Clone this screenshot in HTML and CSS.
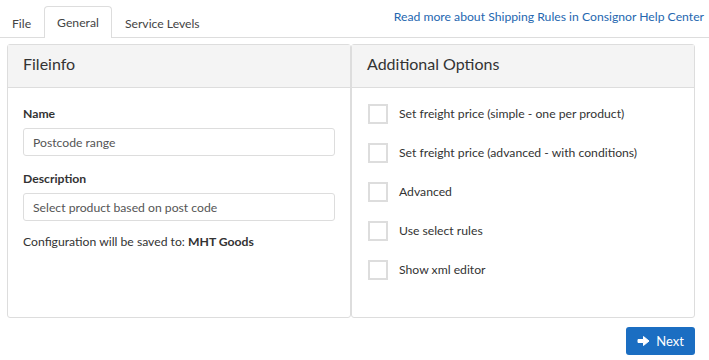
FILE: index.html
```html
<!DOCTYPE html>
<html>
<head>
    <link rel="stylesheet" href="styles.css">
</head>
<body>
    <div class="tab-bar">
        <button class="tab-btn">File</button>
        <button class="tab-btn active">General</button>
        <button class="tab-btn">Service Levels</button>
        <a class="help-link" href="#">Read more about Shipping Rules in Consignor Help Center</a>
    </div>

    <div class="content">
        <div class="panels">
            <div class="panel">
                <div class="panel-head">Fileinfo</div>
                <div class="panel-body">
                    <label class="field-label">Name</label>
                    <input class="field-input" type="text" value="Postcode range">
                    <label class="field-label">Description</label>
                    <input class="field-input" type="text" value="Select product based on post code">
                    <p class="save-note">Configuration will be saved to: <b>MHT Goods</b></p>
                </div>
            </div>

            <div class="panel">
                <div class="panel-head">Additional Options</div>
                <div class="panel-body options">
                    <label class="option"><span class="check"></span>Set freight price (simple - one per product)</label>
                    <label class="option"><span class="check"></span>Set freight price (advanced - with conditions)</label>
                    <label class="option"><span class="check"></span>Advanced</label>
                    <label class="option"><span class="check"></span>Use select rules</label>
                    <label class="option"><span class="check"></span>Show xml editor</label>
                </div>
            </div>
        </div>

        <div class="actions">
            <button class="next-btn">
                <svg width="13" height="12" viewBox="0 0 13 12"><path d="M1 4.5h5.5V1.5L12 6l-5.5 4.5v-3H1z" fill="#fff" stroke="#fff" stroke-width="1" stroke-linejoin="round"/></svg>
                Next
            </button>
        </div>
    </div>
</body>
</html>
```

FILE: styles.css
```css
body {
    font-family: Lato, "Open Sans", sans-serif;
    font-size: 12.2px;
    color: #333;
    margin: 0;
    background: #fff;
}

.tab-bar {
    display: flex;
    align-items: flex-end;
    height: 37px;
    border-bottom: 1px solid #ddd;
    padding-left: 0;
}

.tab-btn {
    font: inherit;
    color: #444;
    background: none;
    border: 1px solid transparent;
    border-bottom: none;
    border-radius: 4px 4px 0 0;
    padding: 0 12px;
    height: 31px;
    margin-bottom: -1px;
    cursor: pointer;
}

.tab-btn:first-child {
    padding: 0 12px 0 11px;
}

.tab-btn.active {
    background: #fff;
    border-color: #ddd;
    height: 32px;
}

.help-link {
    margin-left: auto;
    align-self: center;
    margin-top: -4px;
    padding-right: 5px;
    color: #2567b0;
    text-decoration: none;
}

.content {
    padding: 6px 14px 0 7px;
}

.panels {
    display: grid;
    grid-template-columns: 1fr 1fr;
}

.panel {
    border: 1px solid #ddd;
    border-radius: 3px;
    height: 274px;
    box-sizing: border-box;
}

.panel-head {
    background: #f4f4f4;
    border-bottom: 1px solid #ddd;
    height: 43px;
    box-sizing: border-box;
    padding: 9px 15px;
    font-size: 16px;
    color: #333;
}

.panel-body {
    padding: 18px 15px 14px;
}

.field-label {
    display: block;
    font-weight: bold;
    margin-bottom: 7px;
}

.field-input {
    display: block;
    width: 100%;
    box-sizing: border-box;
    height: 28px;
    border: 1px solid #ddd;
    border-radius: 3px;
    padding: 0 9px;
    font: inherit;
    color: #555;
    margin-bottom: 15px;
}

.save-note {
    margin: -2px 0 0;
}

.options {
    display: flex;
    flex-direction: column;
    gap: 20px;
    padding: 16px 16px;
}

.option {
    display: flex;
    align-items: center;
    gap: 11px;
    height: 19px;
}

.check {
    width: 16px;
    height: 16px;
    border: 2px solid #ddd;
    flex: none;
}

.actions {
    display: flex;
    justify-content: flex-end;
    margin-top: 9px;
}

.next-btn {
    display: flex;
    align-items: center;
    gap: 6px;
    height: 28px;
    padding: 0 11px 0 11px;
    border: none;
    border-radius: 3px;
    background: #1b6ec2;
    color: #fff;
    font: inherit;
    font-size: 13px;
    cursor: pointer;
}
```
